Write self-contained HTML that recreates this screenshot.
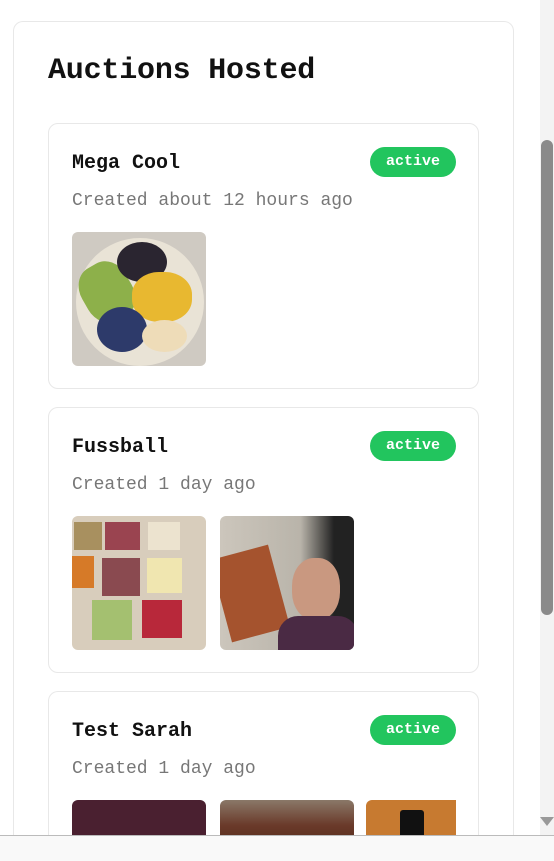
<!DOCTYPE html>
<html><head><style>
*{box-sizing:border-box;margin:0;padding:0}
html,body{width:554px;height:861px;overflow:hidden;background:#fff;font-family:"Liberation Mono",monospace}
#w{position:relative;width:554px;height:861px;overflow:hidden}
.outer{position:absolute;left:13px;top:21px;width:501px;height:830px;border:1px solid #e8e8e8;border-bottom:none;border-radius:10px 10px 0 0;background:#fff}
h1{position:absolute;left:48px;top:54px;font-size:30px;font-weight:bold;color:#111;letter-spacing:-0.2px}
.card{position:absolute;left:48px;width:431px;height:266px;border:1px solid #e8e8e8;border-radius:10px;background:#fff;overflow:hidden}
.t{position:absolute;left:23px;top:28px;font-size:20px;font-weight:bold;color:#111}
.b{position:absolute;left:321px;top:23px;width:86px;height:30px;border-radius:15px;background:#22c55e;color:#fff;font-size:15px;font-weight:bold;text-align:center;line-height:29px}
.s{position:absolute;left:23px;top:67px;font-size:18px;color:#777}
.img{position:absolute;top:108px;width:134px;height:134px;border-radius:6px;overflow:hidden}
.sb{position:absolute;left:540px;top:0;width:14px;height:836px;background:#f3f3f3}
.th{position:absolute;left:541px;top:140px;width:12px;height:475px;border-radius:6px;background:#8a8a8a}
.bot{position:absolute;left:0;top:835px;width:554px;height:26px;background:#f9f9f9;border-top:1px solid #bbb}
</style></head><body><div id="w">
<div class="outer"></div>
<h1>Auctions Hosted</h1>

<div class="card" style="top:123px">
<div class="t">Mega Cool</div><div class="b">active</div>
<div class="s">Created about 12 hours ago</div>
<div class="img" style="left:23px;background:#cfcac2">
<div style="position:absolute;left:4px;top:6px;width:128px;height:128px;border-radius:50%;background:#e9e3d6"></div>
<div style="position:absolute;left:10px;top:30px;width:50px;height:60px;border-radius:40%;background:#8db04a;transform:rotate(-30deg)"></div>
<div style="position:absolute;left:45px;top:10px;width:50px;height:40px;border-radius:50%;background:#2a2530"></div>
<div style="position:absolute;left:60px;top:40px;width:60px;height:50px;border-radius:45%;background:#e8b830"></div>
<div style="position:absolute;left:25px;top:75px;width:50px;height:45px;border-radius:50%;background:#2d3a6a"></div>
<div style="position:absolute;left:70px;top:88px;width:45px;height:32px;border-radius:50%;background:#eedcb8"></div>
</div>
</div>

<div class="card" style="top:407px">
<div class="t">Fussball</div><div class="b">active</div>
<div class="s">Created 1 day ago</div>
<div class="img" style="left:23px;background:#d8cdbc">
<div style="position:absolute;left:2px;top:6px;width:28px;height:28px;background:#a8905f"></div>
<div style="position:absolute;left:33px;top:6px;width:35px;height:28px;background:#9a4450"></div>
<div style="position:absolute;left:76px;top:6px;width:32px;height:28px;background:#ece3cf"></div>
<div style="position:absolute;left:0;top:40px;width:22px;height:32px;background:#d67a28"></div>
<div style="position:absolute;left:30px;top:42px;width:38px;height:38px;background:#8a4a50"></div>
<div style="position:absolute;left:75px;top:42px;width:35px;height:35px;background:#f0e6b0"></div>
<div style="position:absolute;left:20px;top:84px;width:40px;height:40px;background:#a4c070"></div>
<div style="position:absolute;left:70px;top:84px;width:40px;height:38px;background:#b8283a"></div>
</div>
<div class="img" style="left:171px;background:linear-gradient(90deg,#ccc6bc 0%,#b9b4aa 60%,#222 85%)">
<div style="position:absolute;left:0;top:35px;width:60px;height:85px;background:#a5532e;transform:rotate(-15deg)"></div>
<div style="position:absolute;left:72px;top:42px;width:48px;height:62px;border-radius:45%;background:#c99880"></div>
<div style="position:absolute;left:58px;top:100px;width:80px;height:40px;border-radius:20px 20px 0 0;background:#4a2a44"></div>
</div>
</div>

<div class="card" style="top:691px;height:150px;border-bottom:none;border-radius:10px 10px 0 0">
<div class="t">Test Sarah</div><div class="b">active</div>
<div class="s">Created 1 day ago</div>
<div class="img" style="left:23px;height:42px;background:#4a2030"></div>
<div class="img" style="left:171px;height:42px;background:linear-gradient(180deg,#8a7868 0%,#6a3a2a 60%,#5a3020 100%)"></div>
<div class="img" style="left:317px;width:90px;height:42px;border-radius:6px 0 0 0;background:#c77a30">
<div style="position:absolute;left:34px;top:10px;width:24px;height:40px;background:#111;border-radius:3px"></div>
</div>
</div>

<div class="sb"></div><div class="th"></div>
<div style="position:absolute;left:540px;top:817px;width:0;height:0;border-left:7px solid transparent;border-right:7px solid transparent;border-top:9px solid #999"></div>
<div class="bot"></div>
</div></body></html>
